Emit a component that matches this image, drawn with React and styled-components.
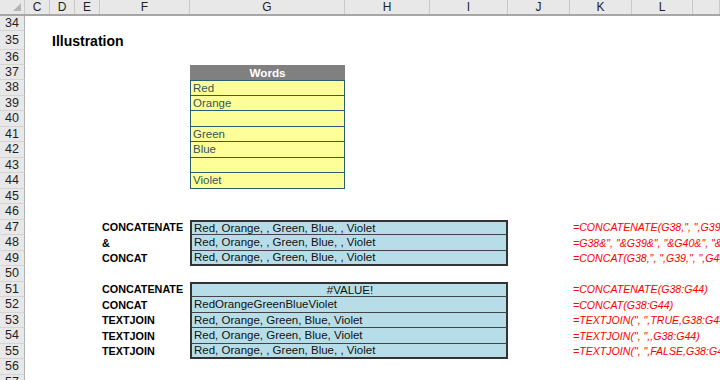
import styled, { createGlobalStyle } from 'styled-components';

const COLS = '25px 25px 25px 25px 90px 155px 85px 78px 62px 62px 61px 1fr';
const LETTERS = ['C', 'D', 'E', 'F', 'G', 'H', 'I', 'J', 'K', 'L', ''];

const GlobalStyle = createGlobalStyle`
  html, body {
    margin: 0;
    padding: 0;
    background: #fff;
    overflow: hidden;
  }
  body {
    font-family: "Liberation Sans", Arial, sans-serif;
  }
`;

const Sheet = styled.div`
  width: 720px;
  height: 380px;
  overflow: hidden;
  background: #fff;
`;

const Row = styled.div`
  display: grid;
  grid-template-columns: ${COLS};
  height: ${p => p.$h}px;
`;

const HeadRow = styled(Row)`
  box-sizing: border-box;
  background: #e8e8e8;
  border-bottom: 2px solid #a6a6a6;
`;

const ColHead = styled.div`
  display: flex;
  align-items: center;
  justify-content: center;
  border-right: 1px solid #c8c8c8;
  font-size: 12px;
  color: #1f1f1f;
`;

const Corner = styled(ColHead)`
  justify-content: flex-end;
  align-items: flex-end;
  padding: 0 3px 3px 0;
`;

const RowNum = styled.div`
  box-sizing: border-box;
  display: flex;
  align-items: center;
  justify-content: center;
  background: #e8e8e8;
  border-right: 1px solid #b0b0b0;
  border-bottom: 1px solid #d4d4d4;
  font-size: 12.5px;
  color: #1f1f1f;
`;

const Title = styled.div`
  grid-column: 3 / 7;
  display: flex;
  align-items: center;
  padding-left: 2px;
  font-size: 14px;
  font-weight: bold;
  color: #000;
  white-space: nowrap;
`;

const Label = styled.div`
  grid-column: 5;
  display: flex;
  align-items: center;
  padding-left: 2px;
  font-size: 10.8px;
  font-weight: bold;
  color: #000;
  white-space: nowrap;
`;

const WordsHead = styled.div`
  grid-column: 6;
  display: flex;
  align-items: center;
  justify-content: center;
  background: #808080;
  color: #fff;
  font-size: 11.7px;
  font-weight: bold;
`;

const Word = styled.div`
  grid-column: 6;
  box-sizing: border-box;
  display: flex;
  align-items: center;
  padding-left: 2px;
  background: #ffff99;
  border: 1px solid #2d5f6a;
  border-top-width: ${p => (p.$first ? 1 : 0)}px;
  color: #35545c;
  font-size: 11.5px;
`;

const Result = styled.div`
  grid-column: 6 / 9;
  box-sizing: border-box;
  display: flex;
  align-items: center;
  justify-content: ${p => (p.$center ? 'center' : 'flex-start')};
  padding-left: 2px;
  background: #b7dee8;
  border-left: 2px solid #333;
  border-right: 2px solid #333;
  border-top: ${p => (p.$pos === 'first' ? '2px solid #333' : 'none')};
  border-bottom: ${p => (p.$pos === 'last' ? '2px solid #333' : '1px solid #444')};
  color: #111;
  font-size: 11.5px;
  white-space: nowrap;
`;

const Formula = styled.div`
  grid-column: 10 / 13;
  display: flex;
  align-items: center;
  padding-left: 3px;
  color: #ff0000;
  font-style: italic;
  font-size: 10.6px;
  white-space: nowrap;
  overflow: hidden;
`;

const words = ['Red', 'Orange', '', 'Green', 'Blue', '', 'Violet'];
const full = 'Red, Orange, , Green, Blue, , Violet';
const joined = 'Red, Orange, Green, Blue, Violet';

const results = {
  47: { label: 'CONCATENATE', value: full, pos: 'first', f: '=CONCATENATE(G38,", ",G39,", ",G40,", ",G41,", ",G42,", ",G43,", ",G44)' },
  48: { label: '&', value: full, pos: 'mid', f: '=G38&", "&G39&", "&G40&", "&G41&", "&G42&", "&G43&", "&G44' },
  49: { label: 'CONCAT', value: full, pos: 'last', f: '=CONCAT(G38,", ",G39,", ",G40,", ",G41,", ",G42,", ",G43,", ",G44)' },
  51: { label: 'CONCATENATE', value: '#VALUE!', center: true, pos: 'first', f: '=CONCATENATE(G38:G44)' },
  52: { label: 'CONCAT', value: 'RedOrangeGreenBlueViolet', pos: 'mid', f: '=CONCAT(G38:G44)' },
  53: { label: 'TEXTJOIN', value: joined, pos: 'mid', f: '=TEXTJOIN(", ",TRUE,G38:G44)' },
  54: { label: 'TEXTJOIN', value: joined, pos: 'mid', f: '=TEXTJOIN(", ",,G38:G44)' },
  55: { label: 'TEXTJOIN', value: full, pos: 'last', f: '=TEXTJOIN(", ",FALSE,G38:G44)' },
};

const heights = { 34: 15, 35: 19, 36: 15, 37: 15 };

const rowContent = n => {
  if (n === 35) return <Title>Illustration</Title>;
  if (n === 37) return <WordsHead>Words</WordsHead>;
  if (n >= 38 && n <= 44) return <Word $first={n === 38}>{words[n - 38]}</Word>;
  const r = results[n];
  if (!r) return null;
  return (
    <>
      <Label>{r.label}</Label>
      <Result $pos={r.pos} $center={r.center}>{r.value}</Result>
      <Formula>{r.f}</Formula>
    </>
  );
};

export default function App() {
  const rows = [];
  for (let n = 34; n <= 57; n++) rows.push(n);

  return (
    <>
      <GlobalStyle />
      <Sheet>
        <HeadRow $h={16}>
          <Corner>
            <svg width="8" height="8" viewBox="0 0 8 8">
              <polygon points="8,0 8,8 0,8" fill="#b5b5b5" />
            </svg>
          </Corner>
          {LETTERS.map((l, i) => (
            <ColHead key={i}>{l}</ColHead>
          ))}
        </HeadRow>
        {rows.map(n => (
          <Row key={n} $h={heights[n] || 15.5}>
            <RowNum>{n}</RowNum>
            {rowContent(n)}
          </Row>
        ))}
      </Sheet>
    </>
  );
}
